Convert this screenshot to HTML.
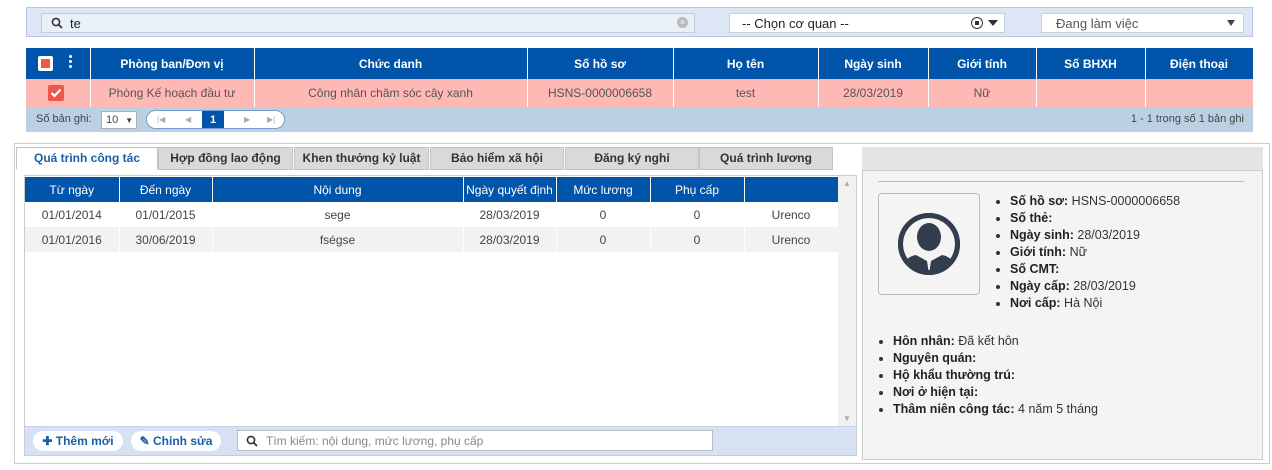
<!DOCTYPE html>
<html><head><meta charset="utf-8"><style>
*{box-sizing:border-box;margin:0;padding:0}
body{width:1272px;height:470px;background:#fff;font-family:"Liberation Sans",Arial,sans-serif;font-size:12px;color:#333;position:relative;overflow:hidden}
.abs{position:absolute;white-space:nowrap}
.filter{left:26px;top:7px;width:1227px;height:30px;background:#dce6f4;border:1px solid #b8c8dc}
.inp{background:#fff;border:1px solid #c8d0da;height:20px;top:5px}
table{border-collapse:collapse;table-layout:fixed}
td,th{white-space:nowrap;overflow:hidden}
.grid th{background:#0055aa;color:#fff;font-weight:bold;border-right:1px solid #fff;height:31px;font-size:12px}
.grid td{background:#feb9b5;color:#555;border-right:1px solid #fff;text-align:center;height:28px;font-size:12px}
.pager{left:26px;top:107px;width:1227px;height:25px;background:#bcd0e4;font-size:11px;color:#444}
.tab{top:147px;height:23px;background:#d9d9d9;border:1px solid #c4c4c4;text-align:center;line-height:21px;font-weight:bold;font-size:12px;color:#333}
.sub th{background:#0055aa;color:#fff;font-weight:normal;border-right:1px solid #fff;height:25px;font-size:12px}
.sub td{text-align:center;height:25px;color:#444;font-size:12px;border-right:1px solid #fff}
ul{list-style:disc;font-size:12.5px;color:#333}
ul li{height:17px;line-height:17px;white-space:nowrap}
b{color:#222}
</style></head><body>
<div class="abs filter">
 <div class="abs inp" style="left:14px;width:654px;border-color:#c0ccd9;background:#eaf0f8">
  <svg class="abs" style="left:9px;top:3px" width="12" height="12" viewBox="0 0 12 12"><circle cx="5" cy="5" r="3.6" fill="none" stroke="#333" stroke-width="1.6"/><path d="M7.5 7.5L11 11" stroke="#333" stroke-width="1.8"/></svg>
  <span class="abs" style="left:28px;top:2px;font-size:13px;color:#222">te</span>
  <span class="abs" style="right:6px;top:3px;width:11px;height:11px;border-radius:50%;background:#bbb;color:#fff;font-size:9px;line-height:11px;text-align:center">×</span>
 </div>
 <div class="abs inp" style="left:702px;width:276px">
  <span class="abs" style="left:12px;top:2px;font-size:13px;color:#222">-- Chọn cơ quan --</span>
  <span class="abs" style="left:241px;top:3px;width:12px;height:12px;border-radius:50%;border:1.5px solid #333"><span class="abs" style="left:2.5px;top:2.5px;width:4px;height:4px;background:#333"></span></span>
  <svg class="abs" style="left:258px;top:6px" width="10" height="6"><path d="M0 0H10L5 6Z" fill="#333"/></svg>
 </div>
 <div class="abs inp" style="left:1014px;width:203px">
  <span class="abs" style="left:14px;top:2px;font-size:13px;color:#555">Đang làm việc</span>
  <svg class="abs" style="right:8px;top:6px" width="8" height="6"><path d="M0 0H8L4 6Z" fill="#444"/></svg>
 </div>
</div>
<table class="abs grid" style="left:26px;top:48px;width:1227px">
<colgroup><col style="width:64px"><col style="width:164px"><col style="width:273px"><col style="width:146px"><col style="width:145px"><col style="width:110px"><col style="width:108px"><col style="width:109px"><col style="width:108px"></colgroup>
<tr><th style="position:relative"><span class="abs" style="left:12px;top:8px;width:15px;height:15px;background:#fff;border-radius:2px"><span class="abs" style="left:3px;top:3px;width:9px;height:9px;background:#f0574c"></span></span><span class="abs" style="left:43px;top:7px;width:3px;height:3px;background:#fff;border-radius:50%;box-shadow:0 5px 0 #fff,0 10px 0 #fff"></span></th><th>Phòng ban/Đơn vị</th><th>Chức danh</th><th>Số hồ sơ</th><th>Họ tên</th><th>Ngày sinh</th><th>Giới tính</th><th>Số BHXH</th><th>Điện thoại</th></tr>
<tr><td style="position:relative"><span class="abs" style="left:22px;top:6px;width:16px;height:16px;background:#f0574c;border-radius:2px"><svg width="16" height="16"><path d="M3.5 8l3 3 6-6.5" stroke="#fff" stroke-width="2.2" fill="none"/></svg></span></td><td>Phòng Kế hoạch đầu tư</td><td>Công nhân chăm sóc cây xanh</td><td>HSNS-0000006658</td><td>test</td><td>28/03/2019</td><td>Nữ</td><td></td><td></td></tr>
</table>
<div class="abs pager">
 <span class="abs" style="left:10px;top:6px">Số bản ghi:</span>
 <div class="abs" style="left:75px;top:4px;width:36px;height:18px;background:#fff;border:1px solid #aab;font-size:11px;line-height:16px;padding-left:4px">10 <span style="font-size:8px;margin-left:4px">▼</span></div>
 <div class="abs" style="left:120px;top:3px;width:139px;height:19px;background:#fff;border:1px solid #7a9cc8;border-radius:10px;overflow:hidden;color:#aaa;font-size:8px">
  <span class="abs" style="left:10px;top:4px">|◀</span><span class="abs" style="left:38px;top:4px">◀</span>
  <span class="abs" style="left:55px;top:0;width:22px;height:19px;background:#0055aa;color:#fff;font-size:11px;font-weight:bold;text-align:center;line-height:18px">1</span>
  <span class="abs" style="left:97px;top:4px">▶</span><span class="abs" style="left:120px;top:4px">▶|</span>
 </div>
 <span class="abs" style="right:9px;top:6px">1 - 1 trong số 1 bản ghi</span>
</div>

<div class="abs" style="left:14px;top:143px;width:1256px;height:321px;border:1px solid #ccc;background:#fff"></div>
<div class="abs" style="left:862px;top:147px;width:401px;height:313px;background:#e4e4e4"></div>
<div class="abs" style="left:862px;top:170px;width:401px;height:290px;background:#f4f4f4;border:1px solid #ccc"></div>
<div class="abs tab" style="left:16px;width:142px;background:#fff;border-bottom-color:#fff;color:#1a5fa8">Quá trình công tác</div>
<div class="abs tab" style="left:158px;width:135px">Hợp đồng lao động</div>
<div class="abs tab" style="left:294px;width:135px">Khen thưởng kỷ luật</div>
<div class="abs tab" style="left:430px;width:134px">Bảo hiểm xã hội</div>
<div class="abs tab" style="left:565px;width:134px">Đăng ký nghỉ</div>
<div class="abs tab" style="left:699px;width:134px">Quá trình lương</div>
<div class="abs" style="left:24px;top:175px;width:833px;height:281px;border:1px solid #ccc;background:#fff"></div>
<table class="abs sub" style="left:25px;top:177px;width:813px">
<colgroup><col style="width:94px"><col style="width:93px"><col style="width:251px"><col style="width:93px"><col style="width:94px"><col style="width:94px"><col style="width:94px"></colgroup>
<tr><th>Từ ngày</th><th>Đến ngày</th><th>Nội dung</th><th>Ngày quyết định</th><th>Mức lương</th><th>Phụ cấp</th><th></th></tr>
<tr><td>01/01/2014</td><td>01/01/2015</td><td>sege</td><td>28/03/2019</td><td>0</td><td>0</td><td>Urenco</td></tr>
<tr style="background:#f2f2f2"><td>01/01/2016</td><td>30/06/2019</td><td>fségse</td><td>28/03/2019</td><td>0</td><td>0</td><td>Urenco</td></tr>
</table>
<div class="abs" style="left:838px;top:176px;width:18px;height:250px;background:#f1f1f1"><span class="abs" style="left:5px;top:3px;font-size:8px;color:#aaa">▲</span><span class="abs" style="left:5px;bottom:3px;font-size:8px;color:#aaa">▼</span></div>
<div class="abs" style="left:25px;top:426px;width:831px;height:29px;background:#d6e2f3;border-top:1px solid #c8d2e0">
 <span class="abs" style="left:8px;top:4px;width:90px;height:20px;background:#fff;border-radius:10px;color:#1a5fa8;font-weight:bold;line-height:20px;text-align:center">✚ Thêm mới</span>
 <span class="abs" style="left:106px;top:4px;width:90px;height:20px;background:#fff;border-radius:10px;color:#1a5fa8;font-weight:bold;line-height:20px;text-align:center">✎ Chỉnh sửa</span>
 <div class="abs" style="left:212px;top:3px;width:476px;height:21px;background:#fff;border:1px solid #bbb">
  <svg class="abs" style="left:8px;top:4px" width="12" height="12" viewBox="0 0 12 12"><circle cx="5" cy="5" r="3.6" fill="none" stroke="#333" stroke-width="1.6"/><path d="M7.5 7.5L11 11" stroke="#333" stroke-width="1.8"/></svg>
  <span class="abs" style="left:28px;top:3px;color:#888">Tìm kiếm: nội dung, mức lương, phụ cấp</span>
 </div>
</div>
<div class="abs" style="left:878px;top:181px;width:366px;height:1px;background:#bbb"></div>
<div class="abs" style="left:878px;top:193px;width:102px;height:102px;border:1px solid #bbb;border-radius:4px;background:#f4f4f4">
 <svg class="abs" style="left:15px;top:15px" width="70" height="70" viewBox="0 0 70 70"><defs><clipPath id="c"><circle cx="35" cy="35" r="27"/></clipPath></defs><circle cx="35" cy="35" r="31" fill="#323e4e"/><circle cx="35" cy="35" r="26" fill="#f4f4f4"/><ellipse cx="35" cy="28" rx="12" ry="14" fill="#323e4e"/><g clip-path="url(#c)"><path d="M5 70 Q8 48 22 46 L33 52 L35 65 L37 52 L48 46 Q62 48 65 70Z" fill="#323e4e"/></g><circle cx="35" cy="35" r="28.5" fill="none" stroke="#323e4e" stroke-width="5"/></svg>
</div>
<ul class="abs" style="left:1010px;top:193px">
<li><b>Số hồ sơ:</b> HSNS-0000006658</li><li><b>Số thẻ:</b></li><li><b>Ngày sinh:</b> 28/03/2019</li><li><b>Giới tính:</b> Nữ</li><li><b>Số CMT:</b></li><li><b>Ngày cấp:</b> 28/03/2019</li><li><b>Nơi cấp:</b> Hà Nội</li>
</ul>
<ul class="abs" style="left:893px;top:333px">
<li><b>Hôn nhân:</b> Đã kết hôn</li><li><b>Nguyên quán:</b></li><li><b>Hộ khẩu thường trú:</b></li><li><b>Nơi ở hiện tại:</b></li><li><b>Thâm niên công tác:</b> 4 năm 5 tháng</li>
</ul>
</body></html>
